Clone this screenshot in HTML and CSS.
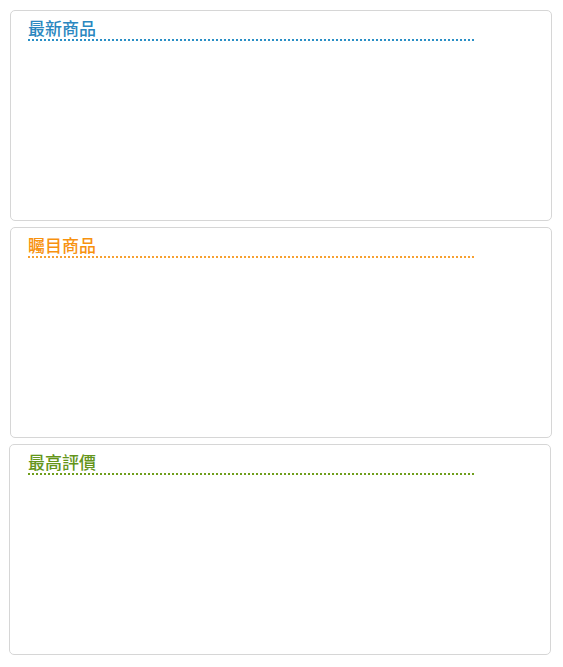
FILE: index.html
```html
<!DOCTYPE html>
<html lang="zh-Hant">
<head>
<meta charset="utf-8">
<title>商品</title>
<link rel="stylesheet" href="styles.css">
</head>
<body>
<div class="page">
  <section class="box">
    <h2 class="title title-new">最新商品</h2>
  </section>
  <section class="box">
    <h2 class="title title-hot">矚目商品</h2>
  </section>
  <section class="box box-last">
    <h2 class="title title-top">最高評價</h2>
  </section>
</div>
</body>
</html>
```
FILE: styles.css
```css
html, body {
  margin: 0;
  padding: 0;
  background: #fff;
}
.page {
  padding: 10px 11px 0 10px;
  display: flex;
  flex-direction: column;
  gap: 6px;
  font-family: "Noto Sans CJK TC", "Noto Sans", sans-serif;
}
.box {
  height: 209px;
  border: 1px solid #d6d6d6;
  border-radius: 5px;
  background: #fff;
}
.box-last {
  margin-left: -1px;
  margin-right: 1px;
}
.title {
  margin: 5px 0 0 17px;
  width: 446px;
  font-size: 17px;
  line-height: 23px;
  font-weight: 500;
  border-bottom: 2px dotted;
}
.box-last .title {
  margin-left: 18px;
}
.title-new {
  color: #2a87c0;
  border-color: #2a8fc6;
}
.title-hot {
  color: #f7920f;
  border-color: #f7a030;
}
.title-top {
  color: #64951a;
  border-color: #6f9e1c;
}
```
